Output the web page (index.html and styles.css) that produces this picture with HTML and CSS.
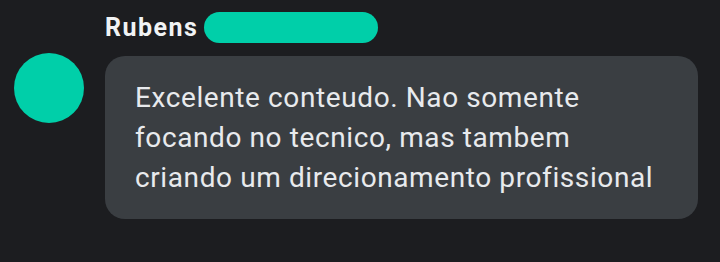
FILE: index.html
```html
<!DOCTYPE html>
<html lang="pt-BR">
<head>
    <meta charset="UTF-8">
    <title>Comentário</title>
    <link rel="stylesheet" href="styles.css">
</head>
<body>
    <div class="comment">
        <div class="avatar"></div>
        <div class="content">
            <div class="author">
                <span class="name">Rubens</span>
                <span class="hidden-name"></span>
            </div>
            <div class="bubble">
                <p>Excelente conteudo. Nao somente<br>focando no tecnico, mas tambem<br>criando um direcionamento profissional</p>
            </div>
        </div>
    </div>
</body>
</html>
```

FILE: styles.css
```css
body {
    margin: 0;
    background-color: #1c1d20;
    font-family: Roboto, "Liberation Sans", sans-serif;
    color: #e8eaed;
}

.comment {
    display: flex;
    align-items: flex-start;
    padding: 12px 22px 0 14px;
}

.avatar {
    width: 70px;
    height: 70px;
    border-radius: 50%;
    background-color: #00cfa9;
    margin-top: 41px;
    flex-shrink: 0;
}

.content {
    flex: 1;
    margin-left: 21px;
}

.author {
    display: flex;
    align-items: center;
    gap: 6px;
    height: 31px;
    margin-bottom: 13px;
}

.name {
    font-size: 25px;
    font-weight: bold;
    letter-spacing: 1.5px;
    color: #f1f3f4;
}

.hidden-name {
    width: 174px;
    height: 31px;
    border-radius: 16px;
    background-color: #00cfa9;
}

.bubble {
    background-color: #3a3e42;
    border-radius: 20px;
    padding: 22px 30px 21px;
}

.bubble p {
    margin: 0;
    font-size: 28px;
    line-height: 40px;
    letter-spacing: 0.6px;
}
```
